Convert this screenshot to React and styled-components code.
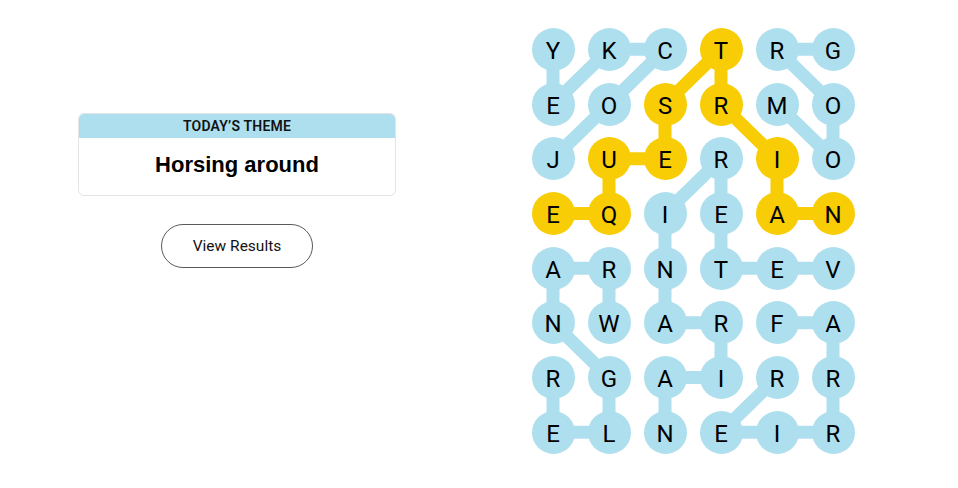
import React from "react";
import styled, { createGlobalStyle } from "styled-components";

const COL = 56;
const ROW = 54.7;
const DOT = 43;

const letters = [
  "YKCTRG",
  "EOSRMO",
  "JUERIO",
  "EQIEAN",
  "ARNTEV",
  "NWARFA",
  "RGAIRR",
  "ELNEIR",
];

const spangram = [
  [0, 3], [1, 2], [1, 3], [2, 1], [2, 2], [2, 4], [3, 0], [3, 1], [3, 4], [3, 5],
];

const words = [
  { gold: false, path: [[2, 0], [1, 1], [0, 2], [0, 1], [1, 0], [0, 0]] },
  { gold: false, path: [[0, 5], [0, 4], [1, 5], [2, 5], [1, 4]] },
  { gold: true, path: [[3, 0], [3, 1], [2, 1], [2, 2], [1, 2], [0, 3], [1, 3], [2, 4], [3, 4], [3, 5]] },
  {
    gold: false,
    path: [[4, 5], [4, 4], [4, 3], [3, 3], [2, 3], [3, 2], [4, 2], [5, 2], [5, 3], [6, 3], [6, 2], [7, 2]],
  },
  { gold: false, path: [[5, 1], [4, 1], [4, 0], [5, 0], [6, 1], [7, 1], [7, 0], [6, 0]] },
  { gold: false, path: [[5, 4], [5, 5], [6, 5], [7, 5], [7, 4], [7, 3], [6, 4]] },
];

const isGold = (r, c) => spangram.some(([a, b]) => a === r && b === c);

const GlobalStyle = createGlobalStyle`
  html, body {
    margin: 0;
    padding: 0;
    background: #ffffff;
    font-family: "Liberation Sans", Arial, sans-serif;
    color: #000000;
  }
`;

const Page = styled.main`
  display: flex;
  align-items: flex-start;
  width: 958px;
  height: 488px;
`;

const Side = styled.section`
  flex: 0 0 474px;
  display: flex;
  flex-direction: column;
  align-items: center;
  padding-top: 113px;
  gap: 28px;
`;

const ThemeCard = styled.div`
  width: 316px;
  border: 1px solid #e4e4e4;
  border-radius: 6px;
  overflow: hidden;
  background: #ffffff;
`;

const ThemeLabel = styled.div`
  background: #aedfee;
  height: 24px;
  line-height: 25px;
  text-align: center;
  font-family: Roboto, "Liberation Sans", sans-serif;
  font-size: 14px;
  font-weight: 600;
  letter-spacing: 0.2px;
  text-transform: uppercase;
  color: #121212;
`;

const ThemeTitle = styled.h1`
  margin: 0;
  height: 57px;
  line-height: 54px;
  text-align: center;
  font-size: 22px;
  font-weight: 700;
  color: #000000;
`;

const ResultsButton = styled.button`
  width: 152px;
  height: 44px;
  border: 1px solid #5a5a5a;
  border-radius: 22px;
  background: #ffffff;
  font-family: Roboto, "Liberation Sans", sans-serif;
  font-size: 15.5px;
  color: #121212;
  cursor: pointer;
`;

const Board = styled.div`
  position: relative;
  margin: 22px 0 0 51px;
  display: grid;
  grid-template-columns: repeat(6, ${COL}px);
  grid-template-rows: repeat(8, ${ROW}px);
`;

const Links = styled.svg`
  position: absolute;
  inset: 0;
  width: ${COL * 6}px;
  height: ${ROW * 8}px;
  pointer-events: none;
`;

const Cell = styled.div`
  position: relative;
  display: flex;
  align-items: center;
  justify-content: center;
`;

const Dot = styled.span`
  box-sizing: border-box;
  width: ${DOT}px;
  height: ${DOT}px;
  padding-top: 3px;
  border-radius: 50%;
  background: ${(p) => (p.$gold ? "#f8cd05" : "#aedfee")};
  display: flex;
  align-items: center;
  justify-content: center;
  font-family: Roboto, "Liberation Sans", sans-serif;
  font-size: 24px;
  color: #000000;
  line-height: 1;
`;

const centre = ([r, c]) => [c * COL + COL / 2, r * ROW + ROW / 2];

const App = () => (
  <>
    <GlobalStyle />
    <Page>
      <Side>
        <ThemeCard>
          <ThemeLabel>Today’s Theme</ThemeLabel>
          <ThemeTitle>Horsing around</ThemeTitle>
        </ThemeCard>
        <ResultsButton>View Results</ResultsButton>
      </Side>
      <Board>
        <Links viewBox={`0 0 ${COL * 6} ${ROW * 8}`}>
          {words.map((w, i) => (
            <polyline
              key={i}
              points={w.path.map((p) => centre(p).join(",")).join(" ")}
              fill="none"
              stroke={w.gold ? "#f8cd05" : "#aedfee"}
              strokeWidth="13"
              strokeLinejoin="round"
            />
          ))}
        </Links>
        {letters.map((row, r) =>
          row.split("").map((ch, c) => (
            <Cell key={`${r}-${c}`}>
              <Dot $gold={isGold(r, c)}>{ch}</Dot>
            </Cell>
          ))
        )}
      </Board>
    </Page>
  </>
);

export default App;
